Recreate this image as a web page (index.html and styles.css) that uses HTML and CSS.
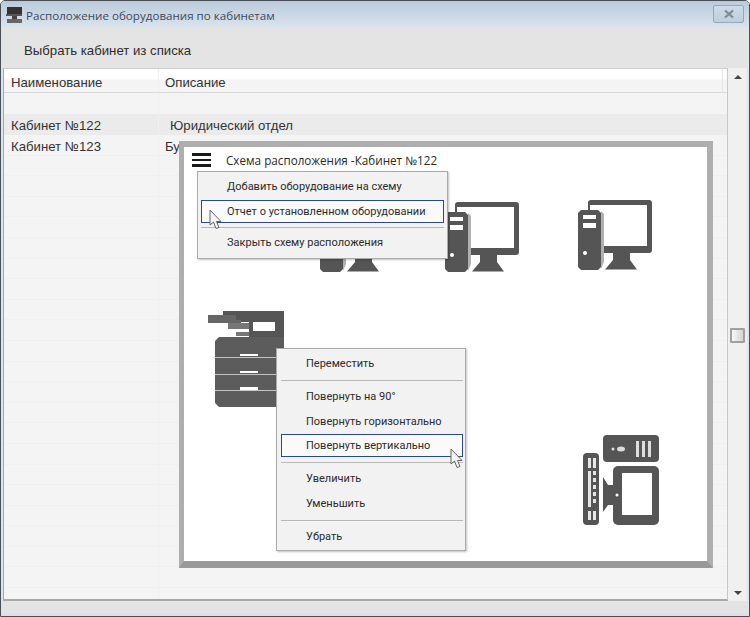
FILE: index.html
```html
<!DOCTYPE html>
<html lang="ru">
<head>
<meta charset="utf-8">
<title>Расположение оборудования по кабинетам</title>
<link rel="stylesheet" href="styles.css">
</head>
<body>
<svg class="defs" width="0" height="0">
  <defs>
    <symbol id="pc" viewBox="0 0 75 70">
      <path fill="#555" fill-rule="evenodd" d="M13 0H71q3 0 3 3V50q0 3-3 3H25V46H69V5H12V10H10V3q0-3 3-3z"/>
      <path fill="#555" d="M35 53H52V60L59 69.500H27L35 60z"/>
      <path fill="#b0b0b0" d="M23 11L26 14V62L23 69z"/>
      <path fill="#555" d="M3 10H20L23 13V67L20 70H3L0 67V13z"/>
      <rect x="5" y="15" width="13" height="4" fill="#fff"/>
      <rect x="5" y="23" width="13" height="5" fill="#fff"/>
      <circle cx="7" cy="53" r="2" fill="#fff"/>
    </symbol>
    <symbol id="printer" viewBox="0 0 78 98">
      <path fill="#555" d="M15 1H76V12H15z"/>
      <path fill="#666" d="M0 5H28V10H33V13H0z"/>
      <path fill="#555" d="M41 8H76V27H41z"/>
      <rect x="45" y="12" width="22" height="9" fill="#fff"/>
      <rect x="20" y="13" width="21" height="6" fill="#777"/>
      <rect x="28" y="22" width="13" height="4" fill="#777"/>
      <path fill="#5c5c5c" d="M11 27H76V97H11L7 93V31z"/>
      <rect x="7" y="47" width="70" height="1" fill="#c4c4c4"/>
      <rect x="7" y="64" width="70" height="1" fill="#c4c4c4"/>
      <rect x="7" y="80" width="70" height="1" fill="#c4c4c4"/>
      <rect x="32" y="44" width="18" height="2" fill="#fff"/>
      <rect x="32" y="61" width="18" height="2" fill="#fff"/>
      <rect x="32" y="77" width="18" height="3" fill="#fff"/>
    </symbol>
    <symbol id="desk" viewBox="0 0 76 90">
      <rect x="20" y="0" width="56" height="27" rx="4" fill="#555"/>
      <ellipse cx="38" cy="14" rx="4" ry="2.500" fill="#ddd"/>
      <circle cx="30" cy="14" r="1.500" fill="#ddd"/>
      <rect x="53" y="6" width="3" height="16" fill="#ddd"/>
      <rect x="59" y="6" width="3" height="16" fill="#ddd"/>
      <rect x="65" y="6" width="3" height="16" fill="#ddd"/>
      <rect x="0" y="18" width="16" height="72" rx="4" fill="#555"/>
      <rect x="5" y="23" width="3" height="10" fill="#e6e6e6"/>
      <rect x="10" y="23" width="3" height="10" fill="#e6e6e6"/>
      <rect x="5" y="36" width="3" height="36" fill="#e6e6e6"/>
      <rect x="10" y="36" width="3" height="4" fill="#e6e6e6"/>
      <rect x="10" y="43" width="3" height="4" fill="#e6e6e6"/>
      <rect x="10" y="50" width="3" height="4" fill="#e6e6e6"/>
      <rect x="10" y="57" width="3" height="4" fill="#e6e6e6"/>
      <rect x="10" y="64" width="3" height="4" fill="#e6e6e6"/>
      <rect x="5" y="76" width="3" height="9" fill="#e6e6e6"/>
      <rect x="10" y="76" width="3" height="9" fill="#e6e6e6"/>
      <rect x="30" y="31" width="46" height="59" rx="5" fill="#555"/>
      <rect x="39" y="38" width="30" height="42" fill="#fff"/>
      <path fill="#555" d="M20 42L25 50H30V70H25L20 77z"/>
      <circle cx="34" cy="60" r="1.500" fill="#fff"/>
    </symbol>
    <symbol id="cursor" viewBox="0 0 14 21">
      <path fill="#f4f4f4" stroke="#666" stroke-width="1" stroke-linejoin="round" d="M1 1V16L4.500 13L7 19.500L10 18.500L7.500 12.500H12z"/>
    </symbol>
  </defs>
</svg>
<div class="window">
  <header class="titlebar">
    <svg class="app-icon" viewBox="0 0 16 16" width="16" height="16">
      <rect x="1" y="0" width="15" height="7" fill="#333"/>
      <rect x="0" y="7" width="16" height="2" fill="#555"/>
      <rect x="6" y="9" width="5" height="3" fill="#444"/>
      <rect x="1" y="12" width="15" height="4" fill="#666"/>
    </svg>
    <span class="title">Расположение оборудования по кабинетам</span>
    <span class="close">
      <svg viewBox="0 0 12 10" width="12" height="10">
        <path d="M2 1.500L10 8.500M10 1.500L2 8.500" stroke="#7d8894" stroke-width="2.200" fill="none"/>
      </svg>
    </span>
  </header>
  <nav class="menubar">Выбрать кабинет из списка</nav>
  <main class="content">
    <section class="grid">
      <div class="row row-head"><div class="cell cell-name">Наименование</div><div class="cell cell-desc">Описание</div></div>
      <div class="row row-blank"><div class="cell cell-name"></div><div class="cell"></div></div>
      <div class="row row-sel"><div class="cell cell-name">Кабинет №122</div><div class="cell cell-pad">Юридический отдел</div></div>
      <div class="row"><div class="cell cell-name">Кабинет №123</div><div class="cell">Бухгалтерия</div></div>
      <div class="row"><div class="cell cell-name"></div><div class="cell"></div></div>
      <div class="row"><div class="cell cell-name"></div><div class="cell"></div></div>
      <div class="row"><div class="cell cell-name"></div><div class="cell"></div></div>
      <div class="row"><div class="cell cell-name"></div><div class="cell"></div></div>
      <div class="row"><div class="cell cell-name"></div><div class="cell"></div></div>
      <div class="row"><div class="cell cell-name"></div><div class="cell"></div></div>
      <div class="row"><div class="cell cell-name"></div><div class="cell"></div></div>
      <div class="row"><div class="cell cell-name"></div><div class="cell"></div></div>
      <div class="row"><div class="cell cell-name"></div><div class="cell"></div></div>
      <div class="row"><div class="cell cell-name"></div><div class="cell"></div></div>
      <div class="row"><div class="cell cell-name"></div><div class="cell"></div></div>
      <div class="row"><div class="cell cell-name"></div><div class="cell"></div></div>
      <div class="row"><div class="cell cell-name"></div><div class="cell"></div></div>
      <div class="row"><div class="cell cell-name"></div><div class="cell"></div></div>
      <div class="row"><div class="cell cell-name"></div><div class="cell"></div></div>
      <div class="row"><div class="cell cell-name"></div><div class="cell"></div></div>
      <div class="row"><div class="cell cell-name"></div><div class="cell"></div></div>
      <div class="row"><div class="cell cell-name"></div><div class="cell"></div></div>
      <div class="row"><div class="cell cell-name"></div><div class="cell"></div></div>
      <div class="row"><div class="cell cell-name"></div><div class="cell"></div></div>
      <div class="row"><div class="cell cell-name"></div><div class="cell"></div></div>
      <div class="row"><div class="cell cell-name"></div><div class="cell"></div></div>
    </section>
    <aside class="scrollbar">
      <span class="arrow-up"></span>
      <span class="thumb"></span>
      <span class="arrow-down"></span>
    </aside>
  </main>

  <section class="scheme">
    <div class="scheme-head">
      <span class="burger"><i></i><i></i><i></i></span>
      <span class="scheme-title">Схема расположения -Кабинет №122</span>
    </div>
    <svg class="item item-pc1"><use href="#pc"/></svg>
    <svg class="item item-pc2"><use href="#pc"/></svg>
    <svg class="item item-pc3"><use href="#pc"/></svg>
    <svg class="item item-printer"><use href="#printer"/></svg>
    <svg class="item item-desk"><use href="#desk"/></svg>
  </section>

  <div class="menu menu-scheme">
    <div class="menu-item">Добавить оборудование на схему</div>
    <div class="menu-item is-active">Отчет о установленном оборудовании</div>
    <div class="menu-sep"></div>
    <div class="menu-item">Закрыть схему расположения</div>
  </div>
  <svg class="cursor cursor-a"><use href="#cursor"/></svg>

  <div class="menu menu-ctx">
    <div class="menu-item">Переместить</div>
    <div class="menu-sep"></div>
    <div class="menu-item">Повернуть на 90°</div>
    <div class="menu-item">Повернуть горизонтально</div>
    <div class="menu-item is-active">Повернуть вертикально</div>
    <div class="menu-sep"></div>
    <div class="menu-item">Увеличить</div>
    <div class="menu-item">Уменьшить</div>
    <div class="menu-sep"></div>
    <div class="menu-item">Убрать</div>
  </div>
  <svg class="cursor cursor-b"><use href="#cursor"/></svg>

  <footer class="statusbar"></footer>
</div>
</body>
</html>
```

FILE: styles.css
```css
* { box-sizing: border-box; }
html, body { margin: 0; height: 100%; overflow: hidden; background: #fff; }
body { font-family: "Liberation Sans", sans-serif; color: #333; }
.defs { position: absolute; }

.window {
  position: relative;
  width: 750px;
  height: 617px;
  display: flex;
  flex-direction: column;
  border: 1px solid #4a4f55;
  border-radius: 5px 5px 0 0;
  background: #e3e3e3;
  overflow: hidden;
}

.titlebar {
  height: 26px;
  flex: none;
  display: flex;
  align-items: center;
  padding: 2px 5px 0 5px;
  background: linear-gradient(#bbcadb, #d9e3ed);
}
.app-icon { margin-right: 4px; }
.title { font-family: "Open Sans", sans-serif; font-size: 11.600px; color: #3c4a5c; flex: 1; }
.close {
  width: 31px;
  height: 18px;
  margin-top: -2px;
  display: flex;
  align-items: center;
  justify-content: center;
  border: 1px solid #98a8b8;
  border-radius: 2px;
  background: linear-gradient(#cfdbe6, #bfcedc);
}

.menubar {
  height: 41px;
  flex: none;
  padding: 14px 0 0 23px;
  font-size: 13.200px;
  line-height: 20px;
  color: #2d2d2d;
  background: #e4e4e4;
}

.content { flex: 1; min-height: 0; display: flex; padding: 0 2px 0 2px; background: #dbe5ee; }

.grid {
  width: 725px;
  flex: none;
  overflow: hidden;
  background: #f4f4f4;
  border-left: 1px solid #a8a8a8;
  border-top: 1px solid #cfcfcf;
  border-bottom: 2px solid #a8a8a8;
  border-right: 1px solid #c8c8c8;
}
.row { display: flex; height: 20.600px; border-bottom: 1px solid #f0f0f0; }
.row-head {
  height: 24px;
  background: linear-gradient(#fff 0, #fff 10px, #f4f4f4 11px);
  border-bottom: 1px solid #d9d9d9;
}
.row-blank { height: 21px; border-bottom: 0; }
.row-sel { height: 21px; background: #ebebeb; border-bottom: 0; }
.cell {
  flex: 1;
  padding: 3px 0 0 6px;
  font-size: 13.200px;
  line-height: 18px;
  color: #333;
  white-space: nowrap;
}
.cell-name { flex: none; width: 155px; padding-left: 7px; border-right: 1px solid #f0f0f0; }
.row-head .cell { padding-top: 5px; }
.row-head .cell-desc { margin-right: 4px; border-right: 1px solid #e6e6e6; }
.cell-pad { padding-left: 11px; }

.scrollbar {
  flex: 1;
  display: flex;
  flex-direction: column;
  align-items: center;
  justify-content: space-between;
  padding: 7px 0 6px;
  background: #f0f0f0;
}
.arrow-up { border: 4px solid transparent; border-top: 0; border-bottom: 4px solid #444; width: 0; height: 0; }
.arrow-down { border: 4px solid transparent; border-bottom: 0; border-top: 4px solid #444; width: 0; height: 0; }
.thumb {
  width: 15px;
  height: 15px;
  border: 2px solid #a0a0a0;
  border-radius: 1px;
  background: linear-gradient(90deg, #f8f8f8, #d4d4d4);
}

.statusbar { height: 15px; flex: none; background: #e3e3e3; border-bottom: 3px solid #d8e2ec; }

.scheme {
  position: absolute;
  left: 178px;
  top: 140px;
  width: 534px;
  height: 427px;
  background: #fff;
  border-style: solid;
  border-width: 6px 6px 7px 5px;
  border-color: #aeaeae;
  border-bottom-color: #999;
}
.scheme-head { display: flex; align-items: center; padding: 5px 0 0 8px; }
.burger { display: flex; flex-direction: column; gap: 3px; width: 19px; margin-right: 15px; }
.burger i { display: block; height: 2.500px; background: #1a1a1a; }
.scheme-title { font-family: "Open Sans", sans-serif; font-size: 11.700px; line-height: 16px; color: #2a2a2a; }

.item { position: absolute; }
.item-pc1 { left: 136px; top: 55px; width: 75px; height: 70px; }
.item-pc2 { left: 261px; top: 55px; width: 75px; height: 70px; }
.item-pc3 { left: 394px; top: 53px; width: 75px; height: 70px; }
.item-printer { left: 24px; top: 163px; width: 78px; height: 98px; }
.item-desk { left: 399px; top: 288px; width: 76px; height: 90px; }

.menu {
  position: absolute;
  background: #f2f2f2;
  border: 1px solid #aaa;
  padding: 3px;
  box-shadow: 1px 1px 2px rgba(0, 0, 0, 0.25);
  font-family: Roboto, sans-serif;
  font-size: 11px;
  color: #2b2b2b;
}
.menu-scheme { left: 196px; top: 170px; width: 251px; height: 88px; }
.menu-scheme .menu-item { padding-left: 25px; }
.menu-scheme .menu-sep { margin: 4px 0 3px; }
.menu-ctx { left: 275px; top: 347px; width: 190px; height: 203px; padding: 3px 2px 3px 4px; }
.menu-item {
  height: 23px;
  line-height: 21px;
  margin-bottom: 1.500px;
  padding-left: 24px;
  border: 1px solid transparent;
  white-space: nowrap;
}
.menu-item.is-active { border-color: #2b4a85; background: #fafafa; }
.menu-sep { height: 1px; margin: 5px 0 4px; background: #b8b8b8; }

.cursor { position: absolute; width: 14px; height: 21px; }
.cursor-a { left: 208px; top: 208px; }
.cursor-b { left: 449px; top: 447px; }
```
